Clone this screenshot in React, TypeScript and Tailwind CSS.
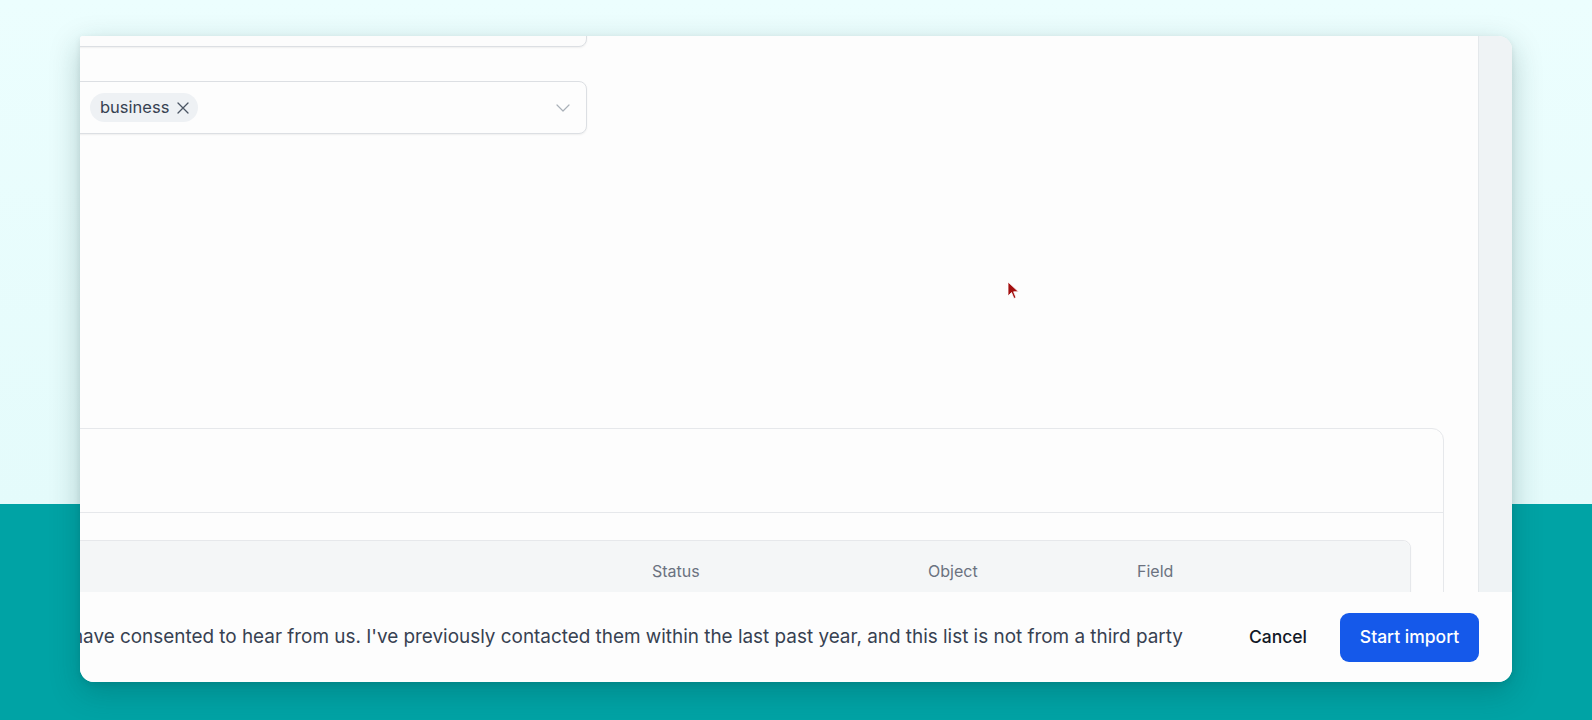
import React from "react";

const font = { fontFamily: "Inter, 'Noto Sans', sans-serif" };

function ChevronDown() {
  return (
    <svg width="14" height="8" viewBox="0 0 14 8" fill="none">
      <path d="M1 1l6 6 6-6" stroke="#a9b0b8" strokeWidth="1.2" strokeLinecap="round" strokeLinejoin="round" />
    </svg>
  );
}

function XIcon() {
  return (
    <svg width="12" height="12" viewBox="0 0 12 12" fill="none">
      <path d="M1 1l10 10M11 1L1 11" stroke="#4b5563" strokeWidth="1.3" strokeLinecap="round" />
    </svg>
  );
}

function Cursor() {
  return (
    <svg width="14" height="20" viewBox="0 0 14 20" className="absolute left-[927px] top-[245px]">
      <path d="M1 1 L1 15 L4.5 11.5 L7 17.5 L9 16.6 L6.6 10.8 L11.5 10.8 Z" fill="#a30f0f" stroke="#ffffff" strokeWidth="0.8" strokeLinejoin="round" />
    </svg>
  );
}

export default function App() {
  return (
    <div
      className="h-[720px] w-[1592px] overflow-hidden bg-[linear-gradient(to_bottom,#ecfefe_0px,#e4fbfb_504px,#00a3a5_504px,#00a3a5_720px)] pl-[80px] pt-[36px]"
      style={font}
    >
      <div className="flex h-[646px] w-[1432px] flex-col overflow-hidden rounded-[14px] rounded-tl-[3px] bg-[#fdfdfd] shadow-[0_10px_30px_rgba(0,60,60,0.25),0_2px_6px_rgba(0,0,0,0.08)]">
        <div className="flex min-h-0 flex-1">
          <div className="relative min-w-0 flex-1 overflow-hidden">
            <div className="-ml-[60px] -mt-[41px] flex flex-col">
              <div className="h-[52px] w-[567px] rounded-lg border border-[#dcdfe3] bg-[#fcfcfc] shadow-[0_1px_2px_rgba(0,0,0,0.06)]" />
              <div className="mt-[34px] flex h-[53px] w-[567px] items-center justify-between rounded-lg border border-[#dcdfe3] bg-[#fdfdfd] pl-[69px] pr-[16px] shadow-[0_1px_2px_rgba(0,0,0,0.06)]">
                <div className="flex h-[29px] items-center gap-[8px] rounded-full bg-[#eef1f4] pl-[10px] pr-[9px] text-[16.5px] text-[#374151]">
                  <span>business</span>
                  <XIcon />
                </div>
                <ChevronDown />
              </div>
              <div className="mr-[34px] mt-[294px] rounded-xl border border-[#e6e8eb] bg-[#fdfdfd]">
                <div className="h-[84px] border-b border-[#e6e8eb]" />
                <div className="pr-[32px] pt-[27px]">
                  <div className="rounded-lg border border-[#e6e8eb] bg-[#fdfdfd] shadow-[0_1px_2px_rgba(0,0,0,0.04)]">
                    <div className="flex h-[60px] items-center justify-end rounded-t-lg bg-[#f4f6f7] text-[16px] text-[#6b7280]">
                      <div className="w-[276px]">Status</div>
                      <div className="w-[209px]">Object</div>
                      <div className="w-[273px]">Field</div>
                    </div>
                    <div className="h-[60px]" />
                  </div>
                </div>
              </div>
            </div>
            <Cursor />
          </div>
          <div className="w-[34px] shrink-0 border-l border-[#e4e8eb] bg-[#eff3f5]" />
        </div>
        <div className="flex h-[90px] shrink-0 items-center bg-[#fdfdfd] pr-[33px]">
          <div className="flex min-w-0 flex-1 justify-end overflow-hidden">
            <span className="whitespace-nowrap text-[18.9px] text-[#374151]">
              I confirm that all of these contacts have consented to hear from us. I've previously contacted them within the last past year, and this list is not from a third party
            </span>
          </div>
          <button className="ml-[66px] text-[17.5px] font-medium text-[#111827]">Cancel</button>
          <button className="ml-[33px] h-[49px] w-[139px] rounded-[9px] bg-[#1559ea] text-[17.5px] font-medium text-white">
            Start import
          </button>
        </div>
      </div>
    </div>
  );
}
